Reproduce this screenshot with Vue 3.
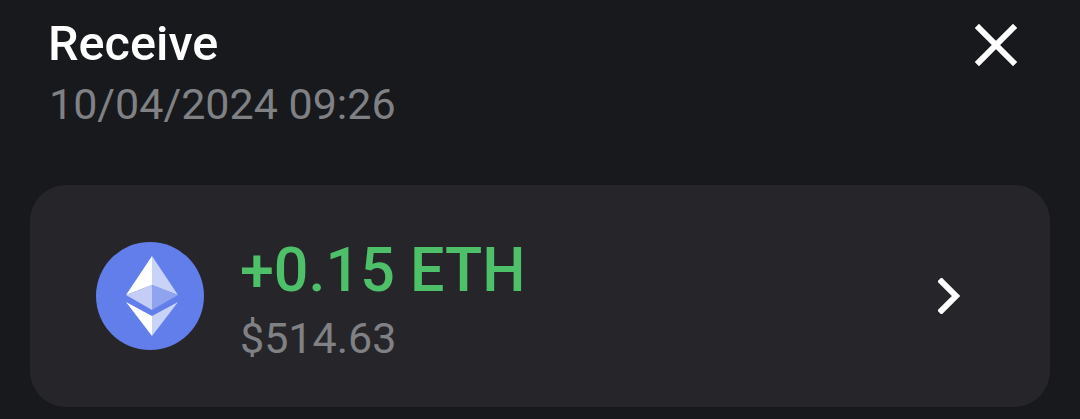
<template>
  <div class="screen">
    <header class="head">
      <div class="head-text">
        <div class="title">Receive</div>
        <div class="date">10/04/2024 09:26</div>
      </div>
      <svg class="close" width="44" height="44" viewBox="0 0 44 44">
        <path d="M5 5 L39 39 M39 5 L5 39" stroke="#fff" stroke-width="6" stroke-linecap="square" fill="none" />
      </svg>
    </header>

    <div class="card">
      <div class="coin">
        <svg class="eth" width="52" height="80" viewBox="0 0 52 80">
          <polygon points="26,0 26,29 0,39" fill="#ffffff" />
          <polygon points="26,0 52,39 26,29" fill="#c9d3f7" />
          <polygon points="26,29 0,39 26,54" fill="#c3cdf5" />
          <polygon points="26,29 52,39 26,54" fill="#8fa3ee" />
          <polygon points="0,46 26,60 26,80" fill="#ffffff" />
          <polygon points="52,46 26,60 26,80" fill="#c9d3f7" />
        </svg>
      </div>
      <div class="amounts">
        <div class="amount">+0.15 ETH</div>
        <div class="fiat">$514.63</div>
      </div>
      <svg class="chevron" width="24" height="36" viewBox="0 0 24 36">
        <path d="M3.5 3.5 L18 18 L3.5 32.5" stroke="#fff" stroke-width="6" stroke-linecap="square" stroke-linejoin="miter" fill="none" />
      </svg>
    </div>
  </div>
</template>

<script setup>
</script>

<style>
html, body {
  margin: 0;
  background: #18191d;
}
</style>

<style scoped>
.screen {
  width: 1080px;
  height: 419px;
  overflow: hidden;
  box-sizing: border-box;
  background: #18191d;
  padding: 0 30px;
  font-family: Roboto, "Liberation Sans", sans-serif;
}

.head {
  height: 185px;
  display: flex;
  justify-content: space-between;
  align-items: flex-start;
  padding: 0 32px 0 18px;
}

.head-text {
  padding-top: 19px;
}

.title {
  font-size: 48.6px;
  line-height: 50px;
  font-weight: 500;
  color: #fff;
}

.date {
  font-size: 43px;
  line-height: 50px;
  margin-top: 10px;
  margin-left: 1px;
  color: #808185;
}

.close {
  margin-top: 23px;
}

.card {
  height: 222px;
  box-sizing: border-box;
  background: #26262a;
  border-radius: 36px;
  display: flex;
  align-items: center;
  padding: 0 88px 0 66px;
}

.coin {
  width: 108px;
  height: 108px;
  border-radius: 50%;
  background: #627eea;
  display: flex;
  align-items: center;
  justify-content: center;
  flex-shrink: 0;
}

.eth {
  margin-left: 4px;
}

.amounts {
  flex: 1;
  margin-left: 36px;
  padding-top: 6px;
}

.amount {
  font-size: 61px;
  line-height: 64px;
  font-weight: 500;
  color: #4fc06a;
}

.fiat {
  font-size: 43px;
  line-height: 44px;
  margin-top: 14px;
  color: #808185;
}
</style>
